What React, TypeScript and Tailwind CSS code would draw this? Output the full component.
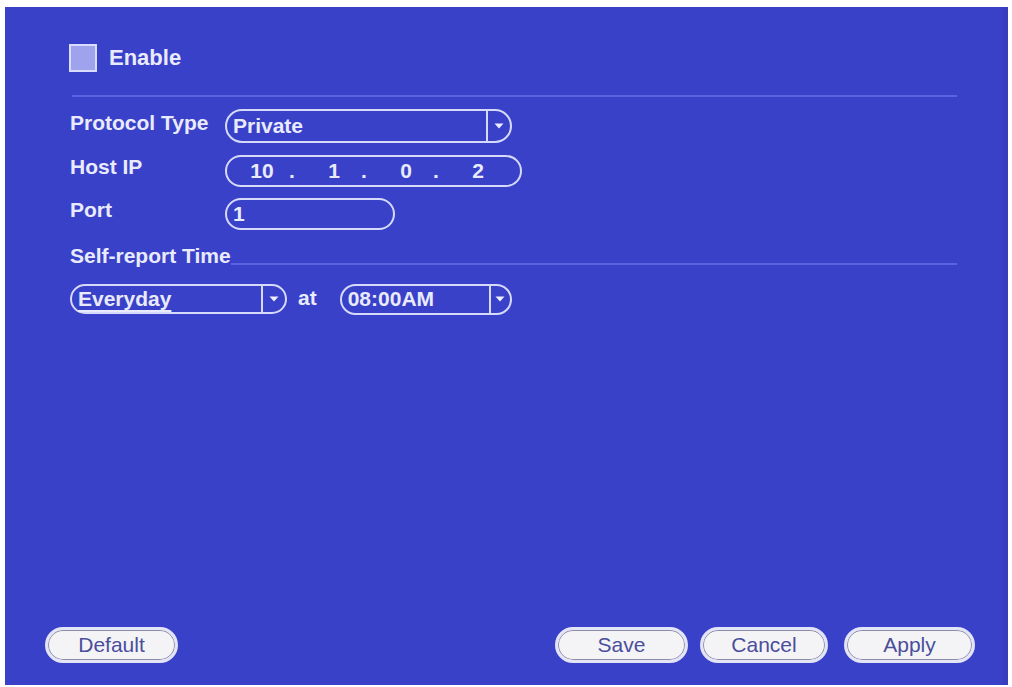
import React from 'react';

const line = 'border-[#d6dafa]';

const Arrow = () => (
  <svg width="10" height="6" viewBox="0 0 10 6">
    <path d="M0.5 0.5h9L5 5.5z" fill="#eef0ff" />
  </svg>
);

type DropdownProps = {
  label: string;
  className: string;
  arrowClass: string;
  underline?: boolean;
};

const Dropdown = ({ label, className, arrowClass, underline }: DropdownProps) => (
  <div className={`flex items-stretch rounded-full border-2 ${line} ${className}`}>
    <span className="flex flex-1 items-center pl-[6px]">
      <span className={underline ? 'underline decoration-2 underline-offset-[4px]' : ''}>{label}</span>
    </span>
    <span className={`flex items-center justify-center border-l-2 ${line} ${arrowClass}`}>
      <Arrow />
    </span>
  </div>
);

const IpBox = ({ parts }: { parts: string[] }) => (
  <div className={`flex h-[32px] w-[297px] items-center rounded-full border-2 ${line} pl-[13px]`}>
    {parts.map((p, i) => (
      <React.Fragment key={i}>
        <span className="w-[44px] text-center">{p}</span>
        {i < parts.length - 1 && <span className="w-[28px] pl-[5px]">.</span>}
      </React.Fragment>
    ))}
  </div>
);

const PanelButton = ({ label, className }: { label: string; className: string }) => (
  <button
    className={`h-[36px] rounded-full border-[3px] border-[#e3e4f7] bg-[#f4f4f6] text-[21px] font-normal text-[#4b4e9c] shadow-[inset_0_0_0_1px_#8c8ea6] ${className}`}
  >
    {label}
  </button>
);

export default function App() {
  return (
    <div className="h-[687px] w-[1012px] bg-white pl-[5px] pt-[7px] font-['Liberation_Sans',Arial,sans-serif]">
      <div className="flex h-[678px] w-[1003px] flex-col bg-[#3a41c9] text-[21px] font-bold leading-6 text-[#e9ebfd] shadow-[inset_-5px_0_0_#373dbc]">
        <div className="pl-[65px] pr-[51px] pt-[37px]">
          {/* enable checkbox */}
          <div className="flex h-[28px] items-center">
            <span className="-ml-px h-[28px] w-[28px] border-2 border-[#d9dbff] bg-[#9fa3ee]" />
            <span className="ml-[12px] text-[22px]">Enable</span>
          </div>

          <div className="ml-[2px] mt-[23px] h-[2px] bg-[#5a62e2]" />

          <div className="mt-[12px] flex h-[34px] items-center">
            <span className="mb-[6px] w-[155px]">Protocol Type</span>
            <Dropdown label="Private" className="h-[34px] w-[287px]" arrowClass="w-[24px]" />
          </div>

          <div className="mt-[12px] flex h-[32px] items-center">
            <span className="mb-[8px] w-[155px]">Host IP</span>
            <IpBox parts={['10', '1', '0', '2']} />
          </div>

          <div className="mt-[11px] flex h-[32px] items-center">
            <span className="mb-[8px] w-[155px]">Port</span>
            <div className={`flex h-[32px] w-[170px] items-center rounded-full border-2 ${line} pl-[6px]`}>1</div>
          </div>

          {/* report schedule */}
          <div className="mt-[14px] flex h-[24px] items-end">
            <span>Self-report Time</span>
            <div className="mb-[3px] h-[2px] flex-1 bg-[#5a62e2]" />
          </div>

          <div className="mt-[16px] flex h-[30px] items-center">
            <Dropdown label="Everyday" className="h-[30px] w-[217px]" arrowClass="w-[24px]" underline />
            <span className="mb-[3px] ml-[11px]">at</span>
            <Dropdown label="08:00AM" className="ml-[23px] h-[31px] w-[172px]" arrowClass="w-[21px]" />
          </div>
        </div>

        <div className="mt-auto flex items-center justify-between pb-[22px] pl-[40px] pr-[33px]">
          <PanelButton label="Default" className="w-[133px]" />
          <div className="flex items-center">
            <PanelButton label="Save" className="w-[133px]" />
            <PanelButton label="Cancel" className="ml-[12px] w-[128px]" />
            <PanelButton label="Apply" className="ml-[16px] w-[131px]" />
          </div>
        </div>
      </div>
    </div>
  );
}
